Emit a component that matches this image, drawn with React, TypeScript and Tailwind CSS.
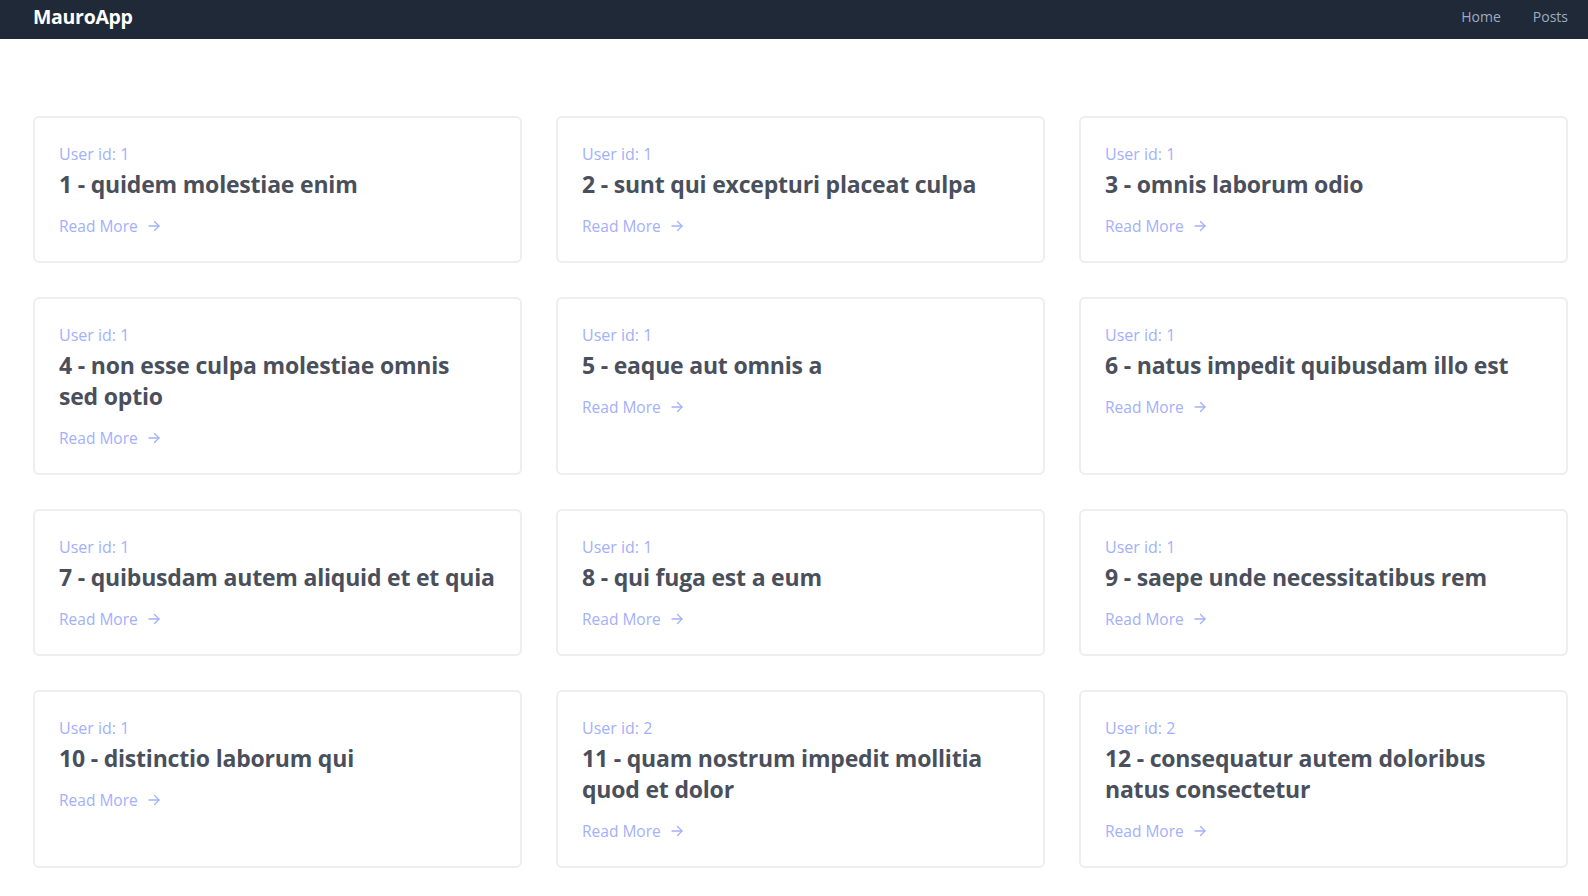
import React from "react";

const posts: { userId: number; id: number; title: string }[] = [
  { userId: 1, id: 1, title: "quidem molestiae enim" },
  { userId: 1, id: 2, title: "sunt qui excepturi placeat culpa" },
  { userId: 1, id: 3, title: "omnis laborum odio" },
  { userId: 1, id: 4, title: "non esse culpa molestiae omnis sed\u00a0optio" },
  { userId: 1, id: 5, title: "eaque aut omnis a" },
  { userId: 1, id: 6, title: "natus impedit quibusdam illo est" },
  { userId: 1, id: 7, title: "quibusdam autem aliquid et et quia" },
  { userId: 1, id: 8, title: "qui fuga est a eum" },
  { userId: 1, id: 9, title: "saepe unde necessitatibus rem" },
  { userId: 1, id: 10, title: "distinctio laborum qui" },
  { userId: 2, id: 11, title: "quam nostrum impedit mollitia quod et dolor" },
  { userId: 2, id: 12, title: "consequatur autem doloribus natus consectetur" },
];

function Arrow() {
  return (
    <svg width="12" height="12" viewBox="0 0 12 12" fill="none" stroke="currentColor" strokeWidth="1.3" strokeLinecap="round" strokeLinejoin="round">
      <path d="M1 6h10" />
      <path d="M6.5 1.5L11 6l-4.5 4.5" />
    </svg>
  );
}

export default function App() {
  return (
    <div className="w-full h-screen overflow-hidden bg-white font-['Open_Sans',sans-serif]">
      <nav className="h-[39px] bg-[#1f2937] flex items-center justify-between pl-[33px] pr-[20px] pb-[6px]">
        <span className="text-white font-bold text-[19.5px] tracking-[-0.3px]">MauroApp</span>
        <div className="flex items-center gap-8 text-[14px] font-medium text-[#9eabbf]">
          <span>Home</span>
          <span>Posts</span>
        </div>
      </nav>
      <main className="pl-[33px] pr-[20px] pt-[77px] pb-10">
        <div className="grid grid-cols-3 gap-[34px]">
          {posts.map((p) => (
            <div key={p.id} className="border-2 border-[#eeeeee] rounded-md px-6 pt-6 pb-[23px]">
              <div className="text-[16px] leading-6 text-[#a3b0fb] font-medium">User id: {p.userId}</div>
              <h2 className="mt-[3px] text-[23px] leading-[31px] font-bold text-[#4a4f5c] tracking-[-0.2px]">
                {p.id} - {p.title}
              </h2>
              <div className="mt-[14px] flex items-center gap-[10px] text-[15.5px] leading-6 text-[#a3b0fb]">
                <span>Read More</span>
                <Arrow />
              </div>
            </div>
          ))}
        </div>
      </main>
    </div>
  );
}
